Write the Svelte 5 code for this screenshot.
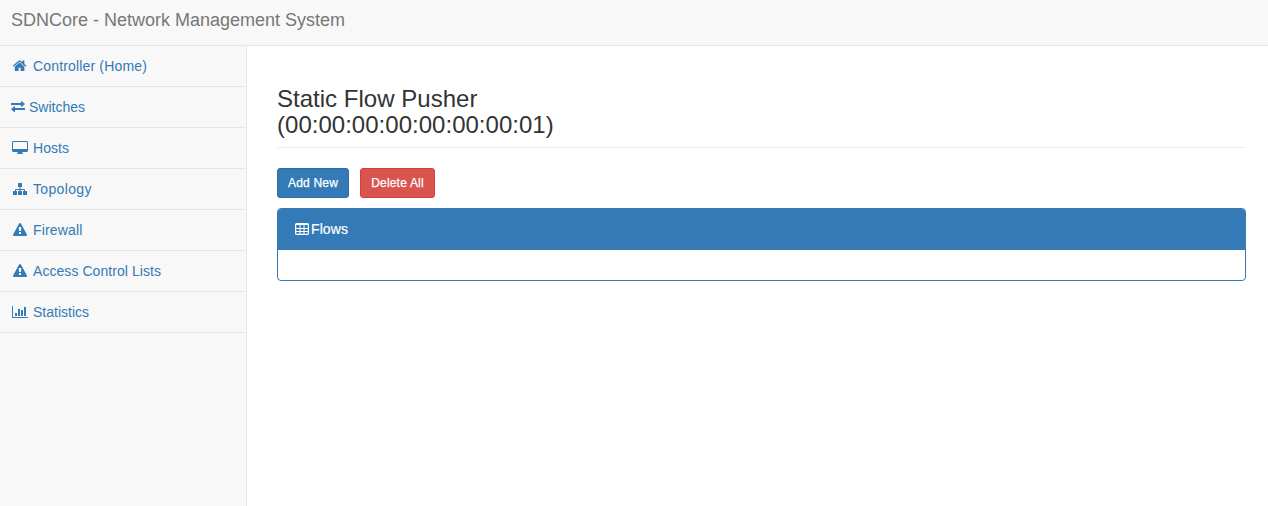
<script>
  const items = [
    { icon: 'home', label: 'Controller (Home)', spacing: 0.16 },
    { icon: 'exchange', label: 'Switches', spacing: 0 },
    { icon: 'desktop', label: 'Hosts', spacing: 0.05 },
    { icon: 'sitemap', label: 'Topology', spacing: 0.35 },
    { icon: 'warning', label: 'Firewall', spacing: 0.15 },
    { icon: 'warning', label: 'Access Control Lists', spacing: 0.06 },
    { icon: 'chart', label: 'Statistics', spacing: 0 }
  ];
</script>

<div class="page">
  <header>SDNCore - Network Management System</header>
  <div class="body">
    <nav>
      {#each items as item}
        <a href="#{item.label}">
          <svg width={item.icon === 'exchange' ? 14 : 18} height="16" fill="currentColor" aria-hidden="true">
            {#if item.icon === 'home'}
              <path transform="translate(1.7 .3) scale(.0083)" d="M1408 992v480q0 26-19 45t-45 19h-384v-384h-256v384h-384q-26 0-45-19t-19-45v-480q0-1 .5-3t.5-3l575-474 575 474q1 2 1 6zm223-69l-62 74q-8 9-21 11h-3q-13 0-21-7l-692-577-692 577q-12 8-24 7-13-2-21-11l-62-74q-8-10-7-23.5t11-21.5l719-599q32-26 76-26t76 26l244 204v-195q0-14 9-23t23-9h192q14 0 23 9t9 23v408l219 182q10 8 11 21.5t-7 23.5z" />
            {:else if item.icon === 'exchange'}
              <path d="M0 4h10V2.500l.5-.5L14 5l-3.500 3-.5-.5V6H0zM14 9H4V7.700L3.500 7.200 0 10.200l3.500 3 .5-.5V11h10z" />
            {:else if item.icon === 'desktop'}
              <path fill-rule="evenodd" d="M2.200 1h13.600q1.200 0 1.200 1.200v8.600q0 1.200-1.200 1.200H11l.5 1.200q.6.1.6.4t-.4.4H6.300q-.4 0-.4-.4t.6-.4L7 12H2.200Q1 12 1 10.800V2.200Q1 1 2.200 1zM2 2.200v6.600q0 .2.2.2h13.600q.2 0 .2-.2V2.200q0-.2-.2-.2H2.200Q2 2 2 2.200z" />
            {:else if item.icon === 'sitemap'}
              <path d="M7.500 2h3q.5 0 .5.500v3q0 .5-.5.500h-1v2H13q1 0 1 1v1h1.500q.5 0 .5.500v3q0 .5-.5.500h-3q-.5 0-.5-.5v-3q0-.5.5-.5h.5V9H9.500v1h1q.5 0 .5.500v3q0 .5-.5.500h-3q-.5 0-.5-.5v-3q0-.5.5-.5h1V9H5v1h.5q.5 0 .5.500v3q0 .5-.5.500h-3q-.5 0-.5-.5v-3q0-.5.5-.5H4V9q0-1 1-1h3.500V6h-1Q7 6 7 5.500v-3Q7 2 7.500 2z" />
            {:else if item.icon === 'warning'}
              <path fill-rule="evenodd" d="M8.100 1.500Q9 .500 9.900 1.500L15.900 12.500Q16.300 14 15 14H3Q1.700 14 2.100 12.500zM7.700 5 8 9h2l.3-4zM8 10v2h2v-2z" />
            {:else}
              <path d="M1 2h1v11h15v1H1zM4 9h2v3H4zM7 5h2v7H7zM10 6h2v6h-2zM13 3h2v9h-2z" />
            {/if}
          </svg>
          <span style:letter-spacing="{item.spacing}px">{item.label}</span>
        </a>
      {/each}
    </nav>
    <main>
      <h3>Static Flow Pusher<br />(00:00:00:00:00:00:00:01)</h3>
      <div class="actions">
        <button class="add">Add New</button>
        <button class="delete">Delete All</button>
      </div>
      <section>
        <div class="heading">
          <svg width="14" height="12" fill="none" stroke="currentColor" aria-hidden="true">
            <rect x=".6" y=".6" width="12.800" height="10.800" rx="1" stroke-width="1.200" />
            <path d="M1 1.500h12M1 5.500h12M1 8.500h12M5 2v9M9 2v9" />
          </svg>
          <span>Flows</span>
        </div>
        <div class="panel-body"></div>
      </section>
    </main>
  </div>
</div>

<style>
  :global(body) { margin: 0; background: #fff; }
  .page, .page * { box-sizing: border-box; }
  .page { height: 506px; display: flex; flex-direction: column; overflow: hidden; font: 14px/20px "Liberation Sans", Arial, sans-serif; color: #333; }
  header { height: 46px; flex: none; padding: 10px 11px; background: #f8f8f8; border-bottom: 1px solid #e7e7e7; font-size: 18px; line-height: 20px; color: #777; }
  .body { flex: 1; display: flex; min-height: 0; }
  nav { width: 247px; flex: none; background: #f8f8f8; border-right: 1px solid #e7e7e7; }
  a { display: flex; align-items: center; gap: 4px; height: 41px; padding-left: 11px; border-bottom: 1px solid #e7e7e7; color: #337ab7; text-decoration: none; }
  svg { display: block; flex: none; }
  main { flex: 1; padding: 40px 22px 0 30px; }
  h3 { height: 62px; margin: 0 0 20px; border-bottom: 1px solid #eee; font-size: 24px; line-height: 26.4px; font-weight: 500; letter-spacing: .02px; }
  .actions { display: flex; gap: 11px; margin-bottom: 10px; }
  button { height: 30px; padding: 0; border: 1px solid #2e6da4; border-radius: 3px; background: #337ab7; color: #fff; font: 12px/18px "Liberation Sans", Arial, sans-serif; letter-spacing: .2px; -webkit-text-stroke: .25px #fff; }
  .add { width: 72px; }
  .delete { width: 75px; background: #d9534f; border-color: #d43f3a; }
  section { height: 73px; border: 1px solid #337ab7; border-radius: 4px; overflow: hidden; }
  .heading { height: 41px; display: flex; align-items: center; gap: 2px; padding: 0 0 2px 17px; background: #337ab7; color: #fff; }
  .heading span { letter-spacing: .1px; -webkit-text-stroke: .2px #fff; }
  .panel-body { height: 30px; }
</style>
